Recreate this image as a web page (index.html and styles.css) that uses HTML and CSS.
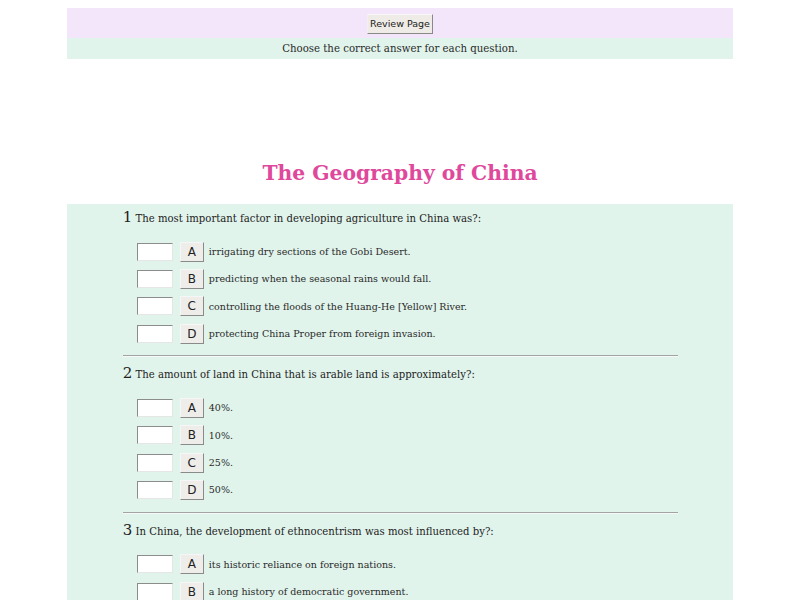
FILE: index.html
```html
<!DOCTYPE html>
<html>
<head>
<meta charset="utf-8">
<link rel="stylesheet" href="styles.css">
</head>
<body>
<div class="topbar"><button class="review">Review Page</button></div>
<div class="instr">Choose the correct answer for each question.</div>
<h1 class="title">The Geography of China</h1>
<div class="quiz">
  <div class="q">
    <div class="qtext"><span class="num">1</span> The most important factor in developing agriculture in China was?:</div>
    <div class="opts">
      <div class="opt"><span class="box"></span><span class="letter">A</span><span class="otext">irrigating dry sections of the Gobi Desert.</span></div>
      <div class="opt"><span class="box"></span><span class="letter">B</span><span class="otext">predicting when the seasonal rains would fall.</span></div>
      <div class="opt"><span class="box"></span><span class="letter">C</span><span class="otext">controlling the floods of the Huang-He [Yellow] River.</span></div>
      <div class="opt"><span class="box"></span><span class="letter">D</span><span class="otext">protecting China Proper from foreign invasion.</span></div>
    </div>
  </div>
  <hr class="sep">
  <div class="q">
    <div class="qtext"><span class="num">2</span> The amount of land in China that is arable land is approximately?:</div>
    <div class="opts">
      <div class="opt"><span class="box"></span><span class="letter">A</span><span class="otext">40%.</span></div>
      <div class="opt"><span class="box"></span><span class="letter">B</span><span class="otext">10%.</span></div>
      <div class="opt"><span class="box"></span><span class="letter">C</span><span class="otext">25%.</span></div>
      <div class="opt"><span class="box"></span><span class="letter">D</span><span class="otext">50%.</span></div>
    </div>
  </div>
  <hr class="sep">
  <div class="q">
    <div class="qtext"><span class="num">3</span> In China, the development of ethnocentrism was most influenced by?:</div>
    <div class="opts">
      <div class="opt"><span class="box"></span><span class="letter">A</span><span class="otext">its historic reliance on foreign nations.</span></div>
      <div class="opt"><span class="box"></span><span class="letter">B</span><span class="otext">a long history of democratic government.</span></div>
    </div>
  </div>
</div>
</body>
</html>
```

FILE: styles.css
```css
body {
  margin: 8px;
  font-family: "DejaVu Serif", serif;
  color: #333;
  background: #fff;
}
.topbar {
  width: 85%;
  margin: 0 auto;
  height: 30px;
  background: #f3e6fb;
  display: flex;
  align-items: center;
  justify-content: center;
}
.review {
  font-family: "DejaVu Sans", sans-serif;
  font-size: 9.5px;
  color: #222;
  background: #efebe6;
  border: 1px solid;
  border-color: #f8f8f8 #8a8a8a #8a8a8a #f0f0f0;
  height: 20px;
  padding: 0 2px;
  margin-top: 1px;
}
.instr {
  width: 85%;
  margin: 0 auto;
  height: 21px;
  line-height: 21px;
  background: #e1f4ec;
  text-align: center;
  font-size: 10.2px;
  color: #2a2a2a;
}
.title {
  margin: 100px 0 0;
  height: 33px;
  line-height: 28px;
  text-align: center;
  font-size: 20.3px;
  font-weight: bold;
  color: #e0489c;
}
.quiz {
  width: 85%;
  margin: 12px auto 0;
  background: #e1f4ec;
  padding: 4px 55px 20px 56px;
  box-sizing: border-box;
}
.qtext {
  height: 18px;
  line-height: 18px;
  font-size: 10.1px;
  color: #222;
}
.num {
  font-size: 15px;
}
.opts {
  margin-top: 12px;
  padding-left: 14px;
}
.opt {
  height: 27.33px;
  display: flex;
  align-items: center;
}
.box {
  width: 34px;
  height: 16px;
  background: #fff;
  border: 1px solid;
  border-color: #8c8c8c #e6e6e6 #e6e6e6 #8c8c8c;
}
.letter {
  margin-left: 7px;
  width: 22px;
  height: 18px;
  line-height: 18px;
  text-align: center;
  font-family: "DejaVu Sans", sans-serif;
  font-size: 12px;
  color: #222;
  background: #efede9;
  border: 1px solid;
  border-color: #f6f6f6 #8a8a8a #8a8a8a #f6f6f6;
}
.otext {
  margin-left: 5px;
  font-size: 9.5px;
  color: #2a2a2a;
}
.sep {
  margin: 8px 0 7px;
  border: 0;
  border-top: 1px solid #a3a3a3;
  border-bottom: 1px solid #f4faf7;
  height: 0;
}
```
